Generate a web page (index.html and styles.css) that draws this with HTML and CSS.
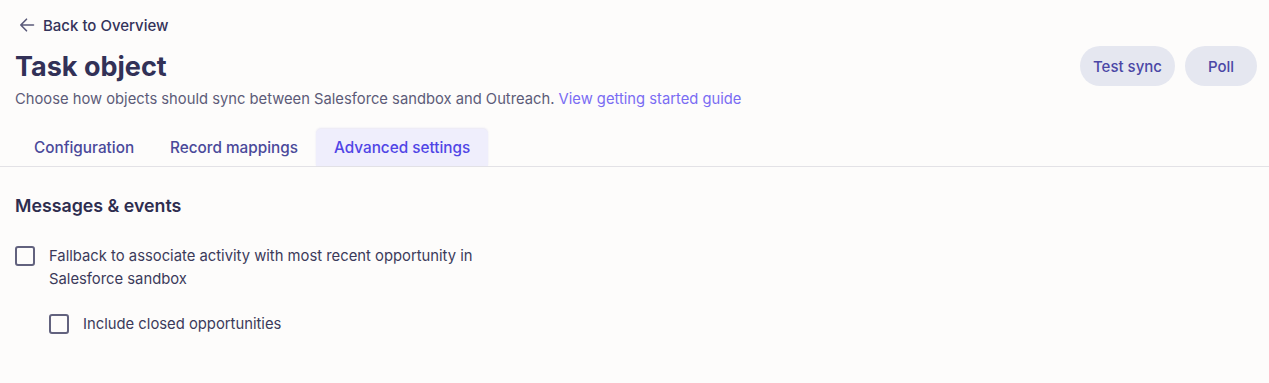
FILE: index.html
```html
<!DOCTYPE html>
<html>
<head>
<meta charset="utf-8">
<link rel="stylesheet" href="styles.css">
</head>
<body>
<div class="page">
  <header class="header">
    <div class="header-main">
      <a class="back" href="#">
        <svg class="back-icon" width="16" height="16" viewBox="0 0 16 16" fill="none" stroke="currentColor" stroke-width="1.6" stroke-linecap="round" stroke-linejoin="round"><path d="M14.5 8H1.8M7.5 2.2L1.8 8l5.7 5.8"/></svg>
        <span>Back to Overview</span>
      </a>
      <h1 class="title">Task object</h1>
      <p class="subtitle">Choose how objects should sync between Salesforce sandbox and Outreach. <a class="link" href="#">View getting started guide</a></p>
    </div>
    <div class="actions">
      <button class="pill pill-test">Test sync</button>
      <button class="pill pill-poll">Poll</button>
    </div>
  </header>
  <nav class="tabs">
    <div class="tab">Configuration</div>
    <div class="tab">Record mappings</div>
    <div class="tab active">Advanced settings</div>
  </nav>
  <section class="section">
    <h2 class="section-title">Messages &amp; events</h2>
    <label class="check">
      <span class="box"></span>
      <span class="check-text">Fallback to associate activity with most recent opportunity in<br>Salesforce sandbox</span>
    </label>
    <label class="check nested">
      <span class="box"></span>
      <span class="check-text">Include closed opportunities</span>
    </label>
  </section>
</div>
</body>
</html>
```

FILE: styles.css
```css
* { box-sizing: border-box; }
html, body { margin: 0; padding: 0; background: #fdfcfb; }
body {
  font-family: Inter, "Noto Sans", sans-serif;
  color: #2e2d4f;
  width: 1269px;
  height: 383px;
  overflow: hidden;
}
.header {
  display: flex;
  justify-content: space-between;
  align-items: flex-start;
  padding: 0 12px 0 15px;
}
.header-main { display: flex; flex-direction: column; }
.back {
  display: flex;
  align-items: center;
  gap: 8px;
  margin-top: 15px;
  margin-left: 4px;
  height: 20px;
  color: #34335a;
  text-decoration: none;
  font-size: 15px;
  font-weight: 500;
}
.back-icon { color: #5a5a7a; }
.title {
  margin: 16px 0 0;
  font-size: 27px;
  line-height: 32px;
  font-weight: 700;
  color: #323157;
}
.subtitle {
  margin: 6px 0 0;
  font-size: 14.75px;
  line-height: 20px;
  color: #5c5b78;
}
.link { color: #7a6cf3; text-decoration: none; }
.actions { display: flex; gap: 10px; margin-top: 46px; }
.pill {
  height: 40px;
  padding: 0;
  border: none;
  border-radius: 20px;
  background: #e5e7f0;
  color: #4b47a6;
  font-family: Inter, sans-serif;
  font-size: 15px;
  font-weight: 500;
  white-space: nowrap;
}
.pill-test { width: 95px; }
.pill-poll { width: 72px; }
.tabs {
  display: flex;
  margin-top: 20px;
  padding-left: 16px;
  border-bottom: 1px solid #e3e2e6;
}
.tab {
  height: 37px;
  padding: 0 18px;
  display: flex;
  align-items: center;
  font-size: 15.3px;
  font-weight: 500;
  color: #4a499a;
  border-radius: 5px 5px 0 0;
}
.tab.active {
  background: #efeefc;
  color: #5045e6;
  box-shadow: 0 -1px 2px rgba(80, 70, 200, 0.12);
}
.section { padding: 0 15px; }
.section-title {
  margin: 28px 0 0;
  font-size: 17.8px;
  line-height: 22px;
  font-weight: 600;
  color: #2e2d4f;
}
.check {
  display: flex;
  align-items: flex-start;
  gap: 14px;
  margin-top: 28px;
}
.box {
  flex: none;
  width: 20px;
  height: 20px;
  border: 2px solid #62627e;
  border-radius: 3px;
  margin-top: 1px;
}
.check-text {
  font-size: 14.8px;
  line-height: 23px;
  color: #3b3a5a;
}
.nested { margin-left: 34px; margin-top: 22px; }
```
